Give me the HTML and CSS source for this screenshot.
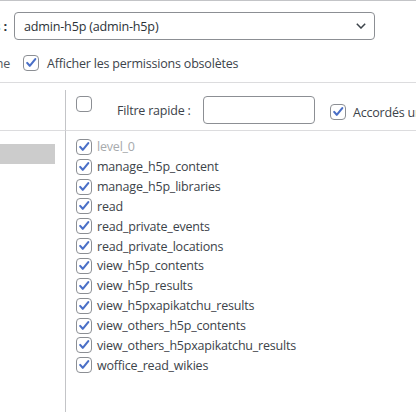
FILE: index.html
```html
<!DOCTYPE html>
<html lang="fr">
<head>
<meta charset="utf-8">
<title>Permissions</title>
<link rel="stylesheet" href="styles.css">
</head>
<body>
<svg class="defs" width="0" height="0" aria-hidden="true">
  <symbol id="ck" viewBox="0 0 16 16">
    <path d="M3.6 7.9 L6.6 11.2 L12.9 3.6" fill="none" stroke="#4a6fc7" stroke-width="2.4" stroke-linecap="round" stroke-linejoin="round"/>
  </symbol>
</svg>
<div class="top">
  <div class="row1">
    <div class="cut"><b>Rôles :</b></div>
    <div class="select">
      <span>admin-h5p (admin-h5p)</span>
      <svg class="chev" viewBox="0 0 10 6" width="10" height="6"><path d="M0.8 0.8 L5 5 L9.2 0.8" fill="none" stroke="#3c434a" stroke-width="1.5"/></svg>
    </div>
  </div>
  <div class="row2">
    <div class="cut2"><span>Tout afficher pour personne</span></div>
    <span class="cb"><svg><use href="#ck"/></svg></span>
    <span class="lbl">Afficher les permissions obsolètes</span>
  </div>
</div>
<div class="table">
  <div class="side head"></div>
  <div class="main head">
    <span class="cb first"></span>
    <span class="filter-label">Filtre rapide :</span>
    <span class="input"></span>
    <span class="cb second"><svg><use href="#ck"/></svg></span>
    <span class="granted">Accordés uniquement</span>
  </div>
  <div class="side body"><div class="sel"></div></div>
  <div class="main body">
    <ul class="perms">
      <li class="off"><span class="cb"><svg><use href="#ck"/></svg></span><span>level_0</span></li>
      <li><span class="cb"><svg><use href="#ck"/></svg></span><span>manage_h5p_content</span></li>
      <li><span class="cb"><svg><use href="#ck"/></svg></span><span>manage_h5p_libraries</span></li>
      <li><span class="cb"><svg><use href="#ck"/></svg></span><span>read</span></li>
      <li><span class="cb"><svg><use href="#ck"/></svg></span><span>read_private_events</span></li>
      <li><span class="cb"><svg><use href="#ck"/></svg></span><span>read_private_locations</span></li>
      <li><span class="cb"><svg><use href="#ck"/></svg></span><span>view_h5p_contents</span></li>
      <li><span class="cb"><svg><use href="#ck"/></svg></span><span>view_h5p_results</span></li>
      <li><span class="cb"><svg><use href="#ck"/></svg></span><span>view_h5pxapikatchu_results</span></li>
      <li><span class="cb"><svg><use href="#ck"/></svg></span><span>view_others_h5p_contents</span></li>
      <li><span class="cb"><svg><use href="#ck"/></svg></span><span>view_others_h5pxapikatchu_results</span></li>
      <li><span class="cb"><svg><use href="#ck"/></svg></span><span>woffice_read_wikies</span></li>
    </ul>
  </div>
</div>
</body>
</html>
```
FILE: styles.css
```css
* { box-sizing: border-box; }
html, body {
  margin: 0;
  padding: 0;
  width: 416px;
  height: 412px;
  overflow: hidden;
  background: #fff;
}
body {
  font-family: "Open Sans", "Noto Sans", sans-serif;
  font-size: 12.5px;
  letter-spacing: -0.2px;
  color: #3c434a;
}
.defs { position: absolute; }
.top {
  border-top: 1px solid #c3c4c7;
  border-bottom: 1px solid #dcdcde;
  padding: 11px 0 9px;
}
.row1 {
  display: flex;
  align-items: center;
  height: 28px;
}
.cut {
  width: 7px;
  display: flex;
  justify-content: flex-end;
  white-space: nowrap;
  font-size: 13px;
  color: #2c3338;
}
.cut b { font-weight: 700; }
.select {
  margin-left: 7px;
  width: 361px;
  height: 28px;
  border: 1px solid #8c8f94;
  border-radius: 4px;
  display: flex;
  align-items: center;
  justify-content: space-between;
  padding: 0 8px 0 9px;
  font-size: 12.6px;
  color: #2c3338;
}
.chev { display: block; }
.row2 {
  margin-top: 13px;
  height: 20px;
  display: flex;
  align-items: center;
}
.cut2 {
  width: 10px;
  display: flex;
  justify-content: flex-end;
  white-space: nowrap;
  color: #50575e;
}
.row2 .cb { margin-left: 13px; }
.row2 .lbl { margin-left: 8px; white-space: nowrap; }
.cb {
  flex: none;
  display: block;
  width: 16px;
  height: 16px;
  border: 1px solid #8c8f94;
  border-radius: 4px;
  background: #fff;
  position: relative;
}
.cb svg {
  position: absolute;
  left: 0;
  top: 0;
  width: 14px;
  height: 14px;
}
.table {
  margin-top: 7px;
  display: grid;
  grid-template-columns: 66px 1fr;
}
.side {
  border-right: 1px solid #c3c4c7;
}
.head {
  border-bottom: 1px solid #dcdcde;
  height: 41px;
}
.main.head {
  display: flex;
  align-items: center;
  padding: 6px 0 6px 10px;
  white-space: nowrap;
}
.cb.first { align-self: flex-start; }
.filter-label {
  margin-left: 25px;
  width: 86px;
}
.input {
  width: 112px;
  height: 28px;
  border: 1px solid #8c8f94;
  border-radius: 4px;
  flex: none;
}
.cb.second {
  margin-left: 15px;
  margin-top: 3px;
}
.granted {
  margin-left: 7px;
  margin-top: 4px;
}
.side.body {
  height: 290px;
}
.sel {
  margin-top: 13px;
  width: 55px;
  height: 20px;
  background: #cccccc;
}
.perms {
  list-style: none;
  margin: 0;
  padding: 6px 0 0 10px;
}
.perms li {
  height: 19.85px;
  display: flex;
  align-items: center;
  white-space: nowrap;
}
.perms li .cb + span { margin-left: 5px; }
.perms li.off span:last-child { color: #a7aaad; }
```
